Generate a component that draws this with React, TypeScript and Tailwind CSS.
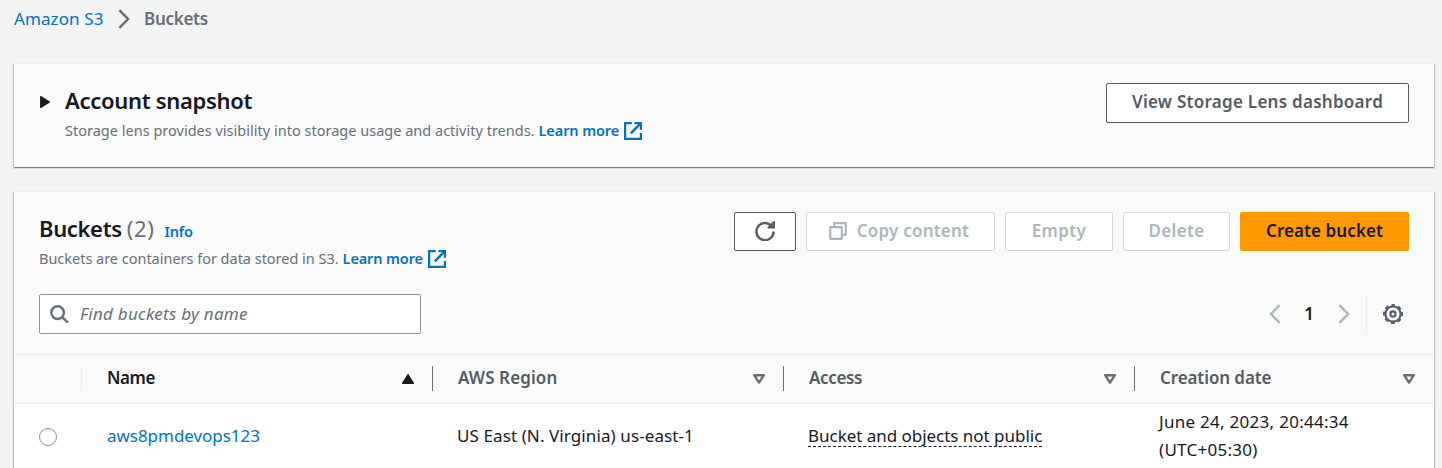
import type { ReactNode } from 'react';

const shadow =
  'shadow-[0_1px_1px_0_rgba(0,28,36,0.3),1px_1px_1px_0_rgba(0,28,36,0.18),-1px_1px_1px_0_rgba(0,28,36,0.18)]';

function ExternalIcon() {
  return (
    <svg className="ml-[5px] h-[18px] w-[18px] shrink-0" viewBox="0 0 18 18" fill="none" stroke="#0073bb" strokeWidth="2.2">
      <path d="M7.8 1.1H1.1V16.9H16.9V11" />
      <path d="M10.4 1.1H16.9V7.8" />
      <path d="M16.4 1.6L6.8 11.4" strokeWidth="2.5" />
    </svg>
  );
}

function Chevron({ left = false, className }: { left?: boolean; className: string }) {
  return (
    <svg className={className} viewBox="0 0 12 20" fill="none" stroke="currentColor" strokeWidth="2.5">
      <path d={left ? 'M10.6 1.2L2 10L10.6 18.8' : 'M1.4 1.2L10 10L1.4 18.8'} />
    </svg>
  );
}

function SortIcon({ active = false }: { active?: boolean }) {
  return active ? (
    <svg className="mt-[1px] h-3 w-[14px]" viewBox="0 0 14 12" fill="#16191f" stroke="#16191f" strokeWidth="1.6" strokeLinejoin="round">
      <path d="M7 1.8L12.2 10.2H1.8Z" />
    </svg>
  ) : (
    <svg className="h-3 w-[14px]" viewBox="0 0 14 12" fill="none" stroke="#687078" strokeWidth="2.4" strokeLinejoin="round">
      <path d="M2.1 2.2H11.9L7 9.6Z" />
    </svg>
  );
}

function DisabledButton({ className, children }: { className: string; children: ReactNode }) {
  return (
    <button
      disabled
      className={`flex h-[39px] items-center justify-center rounded-[2px] border border-[#d5dbdb] bg-white pb-px text-[17px] font-semibold text-[#aab7b8] ${className}`}
    >
      {children}
    </button>
  );
}

function HeaderCell({ label, className, active = false }: { label: string; className: string; active?: boolean }) {
  return (
    <div className={`flex h-[25px] items-center justify-between text-[17px] font-semibold ${className}`}>
      <span className="pb-[2px] leading-6">{label}</span>
      <SortIcon active={active} />
    </div>
  );
}

export default function App() {
  return (
    <div className="h-[468px] w-[1442px] overflow-hidden bg-[#f2f3f3] font-['Noto_Sans',sans-serif] whitespace-nowrap text-[#16191f]">
      <nav className="flex h-[63px] items-start pl-[14px] text-[17px] leading-6">
        <div className="flex h-[38px] items-center">
          <a className="w-[104px] tracking-[0.1px] text-[#0073bb]">Amazon S3</a>
          <Chevron className="h-5 w-3 text-[#687078]" />
          <span className="ml-[14px] font-semibold tracking-[-0.3px] text-[#687078]">Buckets</span>
        </div>
      </nav>

      <section
        className={`mx-[14px] mr-2 flex h-[104px] justify-between border-t border-[#eaeded] bg-[#fafafa] pt-[19px] pr-[25px] pl-[25px] ${shadow}`}
      >
        <div className="flex">
          <svg className="mt-[12px] h-[14px] w-3" viewBox="0 0 12 14" fill="#16191f" stroke="#16191f" strokeWidth="1.4" strokeLinejoin="round">
            <path d="M1.8 1.7L10.4 7L1.8 12.3Z" />
          </svg>
          <div className="ml-[14px]">
            <h2 className="h-9 text-[22px] leading-[34px] font-semibold tracking-[-0.31px]">Account snapshot</h2>
            <p className="flex h-6 items-center text-[14.5px] tracking-[0.01px] text-[#687078]">
              Storage lens provides visibility into storage usage and activity trends.
              <a className="ml-[4px] font-semibold tracking-[-0.1px] text-[#0073bb]">Learn more</a>
              <ExternalIcon />
            </p>
          </div>
        </div>
        <button className="flex h-10 w-[303px] items-center justify-center rounded-[2px] border border-[#545b64] bg-white pb-[2px] text-[17px] font-semibold tracking-[0.27px] text-[#545b64]">
          View Storage Lens dashboard
        </button>
      </section>

      <section className={`mt-6 mr-2 ml-[14px] h-[300px] border-t border-[#eaeded] bg-white ${shadow}`}>
        <div className="h-[162px] bg-[#fafafa] pt-5 pr-[25px] pl-[25px]">
          <div className="flex justify-between">
            <div>
              <div className="flex h-[35px] items-baseline">
                <h2 className="text-[22px] leading-[33px] font-semibold tracking-[-0.35px]">Buckets</h2>
                <span className="ml-[5px] text-[22px] leading-[33px] tracking-[0.7px] text-[#687078]">(2)</span>
                <a className="mt-px ml-[10px] text-[14.5px] font-semibold tracking-[-0.2px] text-[#0073bb]">Info</a>
              </div>
              <p className="flex h-6 items-center text-[14.5px] tracking-[-0.02px] text-[#687078]">
                Buckets are containers for data stored in S3.
                <a className="ml-[4px] font-semibold tracking-[-0.12px] text-[#0073bb]">Learn more</a>
                <ExternalIcon />
              </p>
            </div>
            <div className="flex gap-[10px]">
              <button className="flex h-[39px] w-[62px] items-center justify-center rounded-[2px] border border-[#545b64] bg-white pb-px">
                <svg className="h-5 w-5" viewBox="0 0 20 20" fill="none" stroke="#545b64" strokeWidth="2.4">
                  <path d="M18.6 10.6A8.6 8.6 0 1 1 15.8 4.2" />
                  <path d="M18.8 0.2V6.2H12.6M18.5 1.8L14.4 6" />
                </svg>
              </button>
              <DisabledButton className="w-[189px] pr-[3px] tracking-[0.22px]">
                <svg className="mr-[10px] h-[18px] w-[18px]" viewBox="0 0 18 18" fill="none" stroke="#aab7b8" strokeWidth="2.2" strokeLinejoin="round">
                  <path d="M1.2 5.2H12.8V16.8H1.2Z" />
                  <path d="M5.2 5V1.2H16.8V12.8H13" />
                </svg>
                Copy content
              </DisabledButton>
              <DisabledButton className="w-[108px] tracking-[0.4px]">Empty</DisabledButton>
              <DisabledButton className="w-[107px] tracking-[0.3px]">Delete</DisabledButton>
              <button className="flex h-[39px] w-[169px] items-center justify-center rounded-[2px] bg-[#ff9900] pb-px text-[17px] font-semibold tracking-[0.08px]">
                Create bucket
              </button>
            </div>
          </div>

          <div className="mt-[23px] flex items-center justify-between">
            <div className="flex h-10 w-[382px] items-center rounded-[2px] border border-[#879596] bg-white pl-[10px]">
              <svg className="h-5 w-5" viewBox="0 0 20 20" fill="none" stroke="#687078" strokeWidth="2.5">
                <circle cx="7.6" cy="8.6" r="6.3" />
                <path d="M12.2 13.2L18 18.6" />
              </svg>
              <span className="ml-[10px] text-[17px] tracking-[0.25px] text-[#687078] italic">Find buckets by name</span>
            </div>
            <div className="flex h-10 items-center pr-[6px]">
              <Chevron left className="h-5 w-3 text-[#aab7b8]" />
              <span className="w-[57px] pr-px text-center text-[17px] font-semibold">1</span>
              <Chevron className="h-5 w-3 text-[#aab7b8]" />
              <div className="ml-[16px] h-[39px] w-px bg-[#eaeded]" />
              <svg className="ml-4 h-5 w-5" viewBox="0 0 20 20" fill="none" stroke="#545b64">
                <circle cx="10" cy="10" r="7.6" strokeWidth="2.1" />
                <circle cx="10" cy="10" r="9.1" strokeWidth="1.8" strokeDasharray="4 3.147" strokeDashoffset="2" transform="rotate(-90 10 10)" />
                <circle cx="10" cy="10" r="2.6" strokeWidth="2.1" />
              </svg>
            </div>
          </div>
        </div>

        <div className="flex h-[50px] items-center border-y border-[#eaeded] bg-[#fafafa] pb-px">
          <div className="h-[25px] w-[68px] border-r border-[#eaeded]" />
          <HeaderCell label="Name" active className="w-[351px] border-r border-[#687078] pr-[17px] pl-[25px] tracking-[-0.45px]" />
          <HeaderCell label="AWS Region" className="w-[351px] border-r border-[#687078] pr-[17px] pl-[25px] tracking-[0.1px] text-[#545b64]" />
          <HeaderCell label="Access" className="w-[351px] border-r border-[#687078] pr-[17px] pl-[25px] tracking-[-0.35px] text-[#545b64]" />
          <HeaderCell label="Creation date" className="w-[299px] pr-[18px] pl-[25px] tracking-[-0.1px] text-[#545b64]" />
        </div>

        <div className="flex h-[65px] items-center text-[17px]">
          <div className="w-[68px] pl-[25px]">
            <div className="h-[18px] w-[18px] rounded-full border-[1.5px] border-[#879596] bg-white" />
          </div>
          <a className="w-[351px] pb-[2px] pl-[25px] tracking-[-0.04px] text-[#0073bb]">aws8pmdevops123</a>
          <span className="w-[351px] pb-[2px] pl-[24px] tracking-[0.1px]">US East (N. Virginia) us-east-1</span>
          <div className="w-[351px] pb-px pl-[24px]">
            <span className="inline-block h-[22px] border-b border-dashed border-[#16191f] leading-[21px] tracking-[-0.03px]">Bucket and objects not public</span>
          </div>
          <div className="pb-[2px] pl-[24px] leading-7 tracking-[0.28px]">
            <div>June 24, 2023, 20:44:34</div>
            <div>(UTC+05:30)</div>
          </div>
        </div>
      </section>
    </div>
  );
}
